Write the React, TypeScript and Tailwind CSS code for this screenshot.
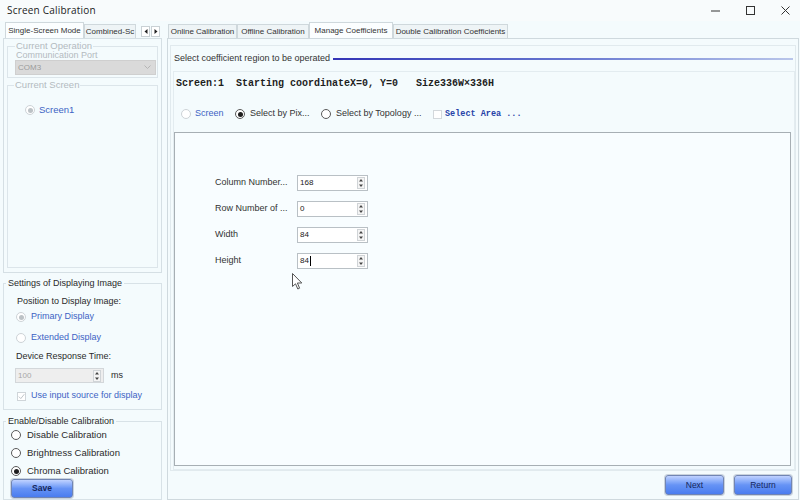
import React from "react";

function Radio({ checked = false, disabled = false }: { checked?: boolean; disabled?: boolean }) {
  return (
    <span
      className={
        "w-[10px] h-[10px] rounded-full border bg-white flex items-center justify-center shrink-0 " +
        (disabled ? "border-[#cdd3d7]" : "border-[#5a5a5a]")
      }
    >
      {checked && <span className={"w-[5px] h-[5px] rounded-full " + (disabled ? "bg-[#bcc2c6]" : "bg-[#1e1e1e]")} />}
    </span>
  );
}

function SpinArrows() {
  return (
    <svg width="8" height="12" viewBox="0 0 8 12">
      <rect x="0.5" y="0.5" width="7" height="11" fill="#f4f4f4" stroke="#d0d4d7" />
      <path d="M4 2 L6 4.6 H2 Z M2 7.4 H6 L4 10 Z" fill="#444" />
    </svg>
  );
}

function Spin({ value, caret = false }: { value: string; caret?: boolean }) {
  return (
    <div className="w-[71px] h-[16px] bg-white border border-[#b9c0c5] flex items-center justify-between pl-[2px] pr-[2px]">
      <span className="text-[8px] text-[#222] flex items-center">
        {value}
        {caret && <span className="inline-block w-px h-[10px] bg-black ml-px" />}
      </span>
      <SpinArrows />
    </div>
  );
}

function Tab({ label, w, active = false }: { label: string; w: string; active?: boolean }) {
  return (
    <div
      className={
        w +
        " flex items-center justify-center border border-b-0 border-[#cfd8dc] text-[8px] text-[#333] whitespace-nowrap overflow-hidden " +
        (active ? "h-[16px] bg-[#fbfeff]" : "h-[14px] bg-[#eef4f6]")
      }
    >
      {label}
    </div>
  );
}

function BlueButton({ label, w, bold = false }: { label: string; w: string; bold?: boolean }) {
  return (
    <div
      className={
        w +
        " h-full rounded-[3px] border border-[#7185b3] shadow-[0_0_0_1px_#c9d3dd] bg-linear-to-b from-[#c0d2ff] via-[#6693f5] to-[#4a7cef] flex items-center justify-center text-[8.5px] text-[#16275c] " +
        (bold ? "font-bold" : "")
      }
    >
      {label}
    </div>
  );
}

export default function App() {
  return (
    <div className="w-[800px] h-[500px] overflow-hidden bg-[#f4fbfd] flex flex-col font-['Liberation_Sans',Arial,sans-serif] text-[#2a2a2a]">
      {/* title bar */}
      <div className="h-[21px] shrink-0 bg-[#f8fbfc] flex items-center justify-between pl-[7px] pr-[9px]">
        <span className="text-[10px] text-[#222] font-['Open_Sans',sans-serif] tracking-[0.2px]">Screen Calibration</span>
        <div className="flex items-center gap-[24px]">
          <svg width="11" height="11" viewBox="0 0 11 11">
            <path d="M1 6 H10" stroke="#333" strokeWidth="1" />
          </svg>
          <svg width="11" height="11" viewBox="0 0 11 11">
            <rect x="1.5" y="1.5" width="8" height="8" fill="none" stroke="#333" strokeWidth="1" />
          </svg>
          <svg width="11" height="11" viewBox="0 0 11 11">
            <path d="M1.5 1.5 L9.5 9.5 M9.5 1.5 L1.5 9.5" stroke="#333" strokeWidth="1" />
          </svg>
        </div>
      </div>

      <div className="flex flex-1 min-h-0">
        {/* left column */}
        <div className="w-[166px] shrink-0 flex flex-col">
          <div className="h-[17px] shrink-0 flex items-end pl-[5px]">
            <Tab label="Single-Screen Mode" w="w-[79px]" active />
            <Tab label="Combined-Sc" w="w-[52px]" />
            <div className="flex gap-px ml-[5px] mb-[1px]">
              <div className="w-[9px] h-[11px] border border-[#c9d1d5] bg-white flex items-center justify-center">
                <svg width="4" height="5" viewBox="0 0 4 5"><path d="M3.5 0 V5 L0.5 2.5 Z" fill="#222" /></svg>
              </div>
              <div className="w-[9px] h-[11px] border border-[#c9d1d5] bg-white flex items-center justify-center">
                <svg width="4" height="5" viewBox="0 0 4 5"><path d="M0.5 0 V5 L3.5 2.5 Z" fill="#222" /></svg>
              </div>
            </div>
          </div>

          {/* box A */}
          <div className="ml-[3px] w-[159px] h-[235px] shrink-0 border border-[#d5dfe4] flex flex-col px-[3px]">
            <fieldset className="mt-[2px] border border-[#dce5ea] pl-[7px] pr-px pb-[2px]">
              <legend className="ml-0 px-px text-[9.5px] leading-[10px] text-[#b3babf]">Current Operation</legend>
              <div className="h-[9px] text-[9px] leading-[9px] text-[#b3babf] pl-px">Communication Port</div>
              <div className="h-[15px] bg-[#dadada] border border-[#cfcfcf] flex items-center justify-between pl-[2px] pr-[4px]">
                <span className="text-[8px] text-[#9a9a9a]">COM3</span>
                <svg width="7" height="5" viewBox="0 0 7 5"><path d="M0.5 0.5 L3.5 3.5 L6.5 0.5" fill="none" stroke="#b5b5b5" /></svg>
              </div>
            </fieldset>
            <fieldset className="mt-[2px] h-[188px] border border-[#dce5ea]">
              <legend className="ml-[6px] px-px text-[9.5px] leading-[10px] text-[#b3babf]">Current Screen</legend>
              <div className="mt-[13px] h-[14px] flex items-center pl-[17px] gap-[4px]">
                <Radio checked disabled />
                <span className="text-[9.5px] text-[#3d63c4]">Screen1</span>
              </div>
            </fieldset>
          </div>

          {/* settings of displaying image */}
          <fieldset className="mt-[4px] ml-[3px] w-[159px] h-[133px] shrink-0 border border-[#d8e2e7] pl-[12px]">
            <legend className="-ml-[10px] pl-[2px] pr-[2px] text-[9px] leading-[12px] text-[#2a2a2a]">Settings of Displaying Image</legend>
            <div className="mt-[6px] h-[14px] flex items-center pl-px text-[9px]">Position to Display Image:</div>
            <div className="mt-[1px] h-[14px] flex items-center gap-[5px]">
              <Radio checked disabled />
              <span className="text-[9px] text-[#3d63c4]">Primary Display</span>
            </div>
            <div className="mt-[7px] h-[14px] flex items-center gap-[5px]">
              <Radio disabled />
              <span className="text-[9px] text-[#3d63c4]">Extended Display</span>
            </div>
            <div className="mt-[5px] h-[14px] flex items-center text-[9px]">Device Response Time:</div>
            <div className="mt-[4px] h-[15px] flex items-center -ml-px">
              <div className="w-[89px] h-[15px] bg-[#eeeeee] border border-[#d3d7da] flex items-center justify-between pl-[2px] pr-[2px]">
                <span className="text-[8px] text-[#a8a8a8]">100</span>
                <SpinArrows />
              </div>
              <span className="ml-[7px] text-[9px]">ms</span>
            </div>
            <div className="mt-[6px] h-[14px] flex items-center gap-[5px] pl-px">
              <span className="w-[9px] h-[9px] border border-[#cfd5d9] bg-white flex items-center justify-center">
                <svg width="7" height="7" viewBox="0 0 7 7"><path d="M0.8 3.6 L2.8 5.6 L6.3 1.2" fill="none" stroke="#bfc5c9" strokeWidth="1" /></svg>
              </span>
              <span className="text-[9px] text-[#3d63c4]">Use input source for display</span>
            </div>
          </fieldset>

          {/* enable / disable calibration */}
          <fieldset className="mt-[5px] ml-[3px] w-[159px] flex-1 border border-[#d8e2e7] pl-[7px]">
            <legend className="-ml-[5px] pl-[2px] pr-[2px] text-[9px] leading-[12px] text-[#2a2a2a]">Enable/Disable Calibration</legend>
            <div className="mt-[1px] h-[14px] flex items-center gap-[6px]">
              <Radio />
              <span className="text-[9.5px]">Disable Calibration</span>
            </div>
            <div className="mt-[4px] h-[14px] flex items-center gap-[6px]">
              <Radio />
              <span className="text-[9.5px]">Brightness Calibration</span>
            </div>
            <div className="mt-[4px] h-[14px] flex items-center gap-[6px]">
              <Radio checked />
              <span className="text-[9.5px]">Chroma Calibration</span>
            </div>
            <div className="mt-[1px] h-[19px] flex">
              <BlueButton label="Save" w="w-[62px]" bold />
            </div>
          </fieldset>
        </div>

        {/* right column */}
        <div className="flex-1 flex flex-col pl-px">
          <div className="h-[17px] shrink-0 flex items-end pl-[1px]">
            <Tab label="Online Calibration" w="w-[69px]" />
            <Tab label="Offline Calibration" w="w-[72px]" />
            <Tab label="Manage Coefficients" w="w-[84px]" active />
            <Tab label="Double Calibration Coefficients" w="w-[115px]" />
          </div>

          <div className="flex-1 min-h-0 border border-[#cfd9de] mr-px flex flex-col px-[2px] pt-[6px]">
            {/* region group */}
            <div className="flex-1 min-h-0 border border-[#e1eaee] flex flex-col">
              <div className="mt-[6px] h-[14px] flex items-center pl-[3px] pr-[2px]">
                <span className="text-[9px] text-[#333] whitespace-nowrap">Select coefficient region to be operated</span>
                <div className="flex-1 h-[2px] ml-[3px] bg-linear-to-r from-[#3434b6] via-[#6574cf] to-[#b9c6ea]" />
              </div>

              <div className="mt-[5px] ml-[2px] flex-1 min-h-0 border border-[#e3ecf0] flex flex-col">
                <div className="h-[22px] flex items-center pl-[2px] font-['Liberation_Mono',monospace] font-bold text-[10px] text-[#1e1e1e] whitespace-pre">
                  {"Screen:1  Starting coordinateX=0, Y=0   Size336W×336H"}
                </div>

                <div className="mt-[12px] h-[16px] flex items-center pl-[7px]">
                  <div className="w-[54px] flex items-center gap-[4px]">
                    <Radio disabled />
                    <span className="text-[9px] text-[#3d63c4]">Screen</span>
                  </div>
                  <div className="w-[86px] flex items-center gap-[5px]">
                    <Radio checked />
                    <span className="text-[9px] text-[#333]">Select by Pix...</span>
                  </div>
                  <div className="w-[112px] flex items-center gap-[5px]">
                    <Radio />
                    <span className="text-[9px] text-[#333]">Select by Topology ...</span>
                  </div>
                  <div className="flex items-center gap-[3px]">
                    <span className="w-[9px] h-[9px] border border-[#d3d8dc] bg-white" />
                    <span className="font-['Liberation_Mono',monospace] font-bold text-[8.5px] text-[#2743a8] whitespace-pre">Select Area ...</span>
                  </div>
                </div>

                <div className="mt-[10px] mr-[3px] h-[334px] shrink-0 border border-[#a7afb4] bg-[#f8fdff] relative pl-[40px] pt-[42px]">
                  <div className="flex flex-col gap-[10px]">
                    {[
                      ["Column Number...", "168", false],
                      ["Row Number of ...", "0", false],
                      ["Width", "84", false],
                      ["Height", "84", true],
                    ].map(([label, value, caret]) => (
                      <div key={label as string} className="h-[16px] flex items-center">
                        <span className="w-[82px] text-[9px] text-[#333] whitespace-nowrap">{label}</span>
                        <Spin value={value as string} caret={caret as boolean} />
                      </div>
                    ))}
                  </div>
                  {/* mouse cursor */}
                  <svg className="absolute left-[117px] top-[140px]" width="11" height="17" viewBox="0 0 11 17">
                    <path d="M0.5 0.5 L0.5 13.5 L3.5 10.8 L5.8 16 L7.6 15.2 L5.4 10 L9.8 10 Z" fill="#fff" stroke="#555" strokeWidth="1" strokeLinejoin="round" />
                  </svg>
                </div>
              </div>
            </div>

            <div className="h-[20px] shrink-0 my-[4px] flex justify-end gap-[10px] pr-[4px]">
              <BlueButton label="Next" w="w-[59px]" />
              <BlueButton label="Return" w="w-[58px]" />
            </div>
          </div>
        </div>
      </div>
    </div>
  );
}
